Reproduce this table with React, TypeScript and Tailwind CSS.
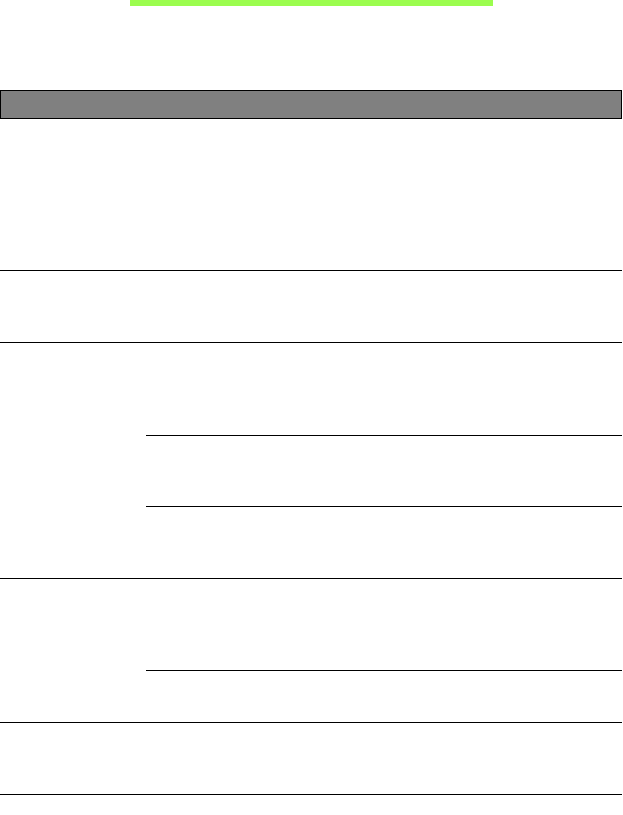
type SubRow = { h: number };
type Row = { subs: SubRow[] };

// Empty spec table: heights are the cell body heights (border excluded).
const rows: Row[] = [
    { subs: [{ h: 151 }] },
    { subs: [{ h: 71 }] },
    { subs: [{ h: 92 }, { h: 70 }, { h: 71 }] },
    { subs: [{ h: 91 }, { h: 51 }] },
    { subs: [{ h: 71 }] },
];

function TableRow({ row }: { row: Row }) {
    if (row.subs.length === 1) {
        return (
            <div
                className="border-b border-black"
                style={{ height: row.subs[0].h + 1 }}
            />
        );
    }
    return (
        <div className="flex border-b border-black">
            <div className="w-[146px] shrink-0" />
            <div className="flex flex-1 flex-col">
                {row.subs.map((s, i) => (
                    <div
                        key={i}
                        className={i < row.subs.length - 1 ? 'border-b border-black' : ''}
                        style={{ height: i < row.subs.length - 1 ? s.h + 1 : s.h }}
                    />
                ))}
            </div>
        </div>
    );
}

export default function App() {
    return (
        <div className="min-h-[815px] w-[623px] bg-white font-['Liberation_Sans',sans-serif]">
            <div className="w-[622px]">
                <div className="ml-[130px] h-[6px] w-[363px] bg-[#9bfd4e]" />
                <div className="mt-[84px] h-[29px] border border-black bg-[#808080]" />
                {rows.map((r, i) => (
                    <TableRow key={i} row={r} />
                ))}
            </div>
        </div>
    );
}
